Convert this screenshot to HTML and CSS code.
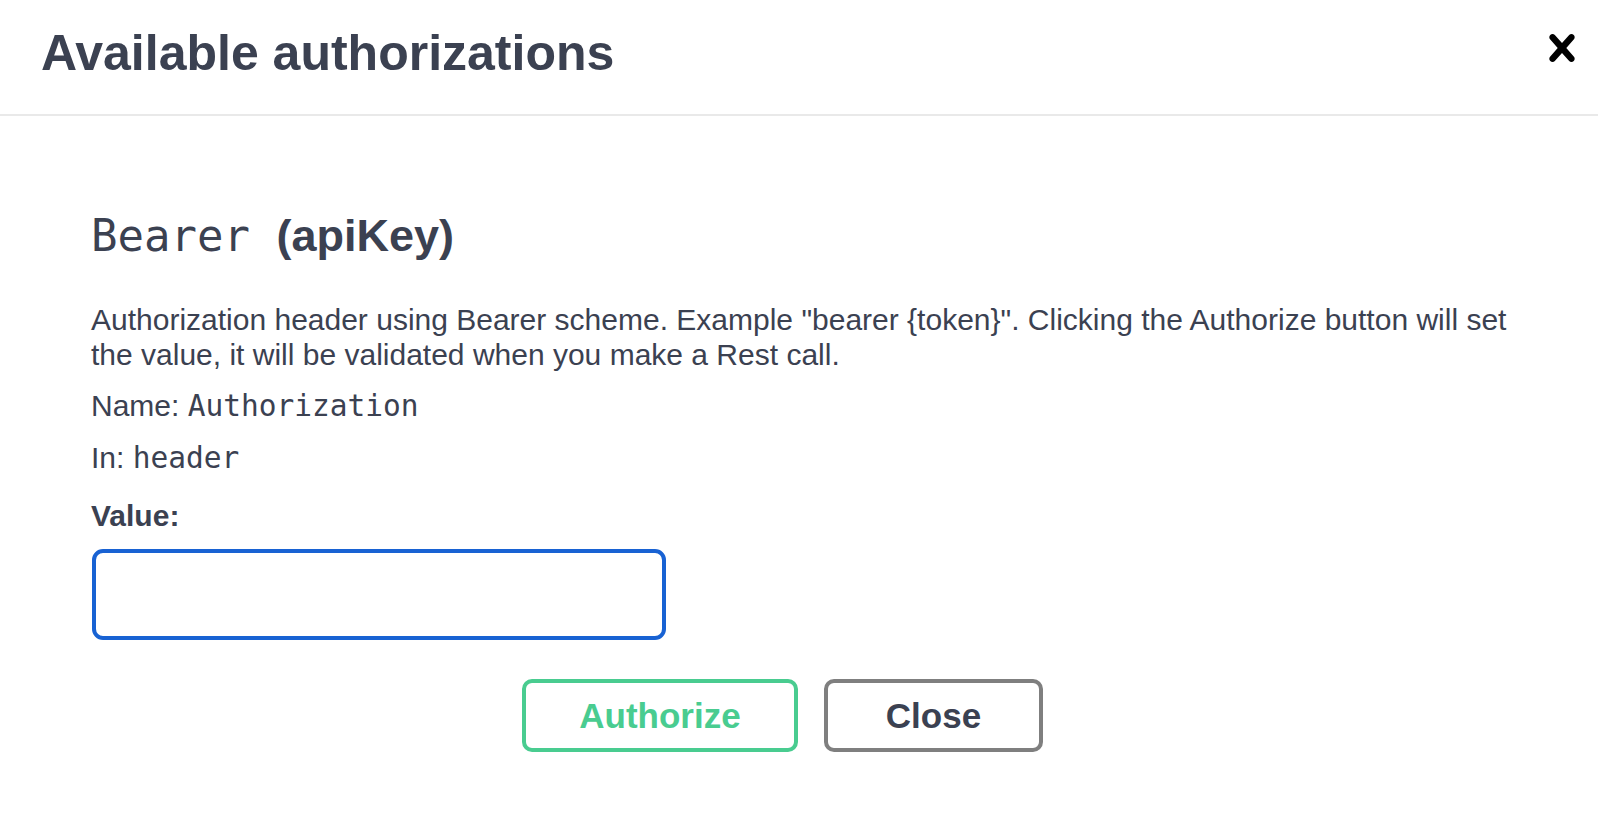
FILE: index.html
```html
<!DOCTYPE html>
<html lang="en">
<head>
<meta charset="utf-8">
<title>Available authorizations</title>
<link rel="stylesheet" href="styles.css">
</head>
<body>
<div class="modal">
  <div class="modal-header">
    <h3 class="modal-title">Available authorizations</h3>
    <button class="close-modal" type="button" aria-label="Close">
      <svg class="close-icon" viewBox="0 0 20 20" width="54" height="54" aria-hidden="true">
        <path d="M14.348 14.849c-.469.469-1.229.469-1.697 0L10 11.819l-2.651 3.029c-.469.469-1.229.469-1.697 0-.469-.469-.469-1.229 0-1.697l2.758-3.15-2.759-3.152c-.469-.469-.469-1.228 0-1.697.469-.469 1.228-.469 1.697 0L10 8.183l2.651-3.031c.469-.469 1.228-.469 1.697 0 .469.469.469 1.229 0 1.697l-2.758 3.152 2.758 3.15c.469.469.469 1.229 0 1.698z"/>
      </svg>
    </button>
  </div>
  <div class="modal-body">
    <h4 class="scheme-title"><code class="scheme-name">Bearer </code>(apiKey)</h4>
    <p class="desc">Authorization header using Bearer scheme. Example "bearer {token}". Clicking the Authorize button will set the value, it will be validated when you make a Rest call.</p>
    <p class="meta meta-name">Name: <code class="mono">Authorization</code></p>
    <p class="meta meta-in">In: <code class="mono">header</code></p>
    <label class="value-label" for="value">Value:</label>
    <input id="value" class="value-input" type="text">
    <div class="btn-wrapper">
      <button class="btn btn-authorize" type="button">Authorize</button>
      <button class="btn btn-close" type="button">Close</button>
    </div>
  </div>
</div>
</body>
</html>
```

FILE: styles.css
```css
html, body {
  margin: 0;
  padding: 0;
  background: #ffffff;
}

body {
  font-family: "Liberation Sans", Arial, Helvetica, sans-serif;
  color: #3b4151;
}

.modal {
  width: 1598px;
  min-height: 826px;
}

.modal-header {
  display: flex;
  justify-content: space-between;
  align-items: flex-start;
  padding: 23px 9px 31px 41px;
  border-bottom: 2px solid #e9e9e9;
}

.modal-title {
  margin: 0;
  font-size: 50px;
  line-height: 60px;
  font-weight: 700;
  color: #3b4151;
}

.close-modal {
  margin: -2px 0 0 0;
  padding: 0;
  border: 0;
  background: none;
  width: 54px;
  height: 54px;
  cursor: pointer;
}

.close-icon {
  display: block;
  fill: #000000;
}

.modal-body {
  padding: 93px 67px 0 91px;
}

.scheme-title {
  margin: 0;
  font-size: 45px;
  line-height: 54px;
  font-weight: 700;
  color: #3b4151;
}

.scheme-name {
  font-family: "DejaVu Sans Mono", "Liberation Mono", monospace;
  font-size: 44px;
  font-weight: 400;
  line-height: 54px;
  white-space: pre;
}

.desc {
  margin: 39px 0 17px 0;
  font-size: 30px;
  line-height: 35px;
}

.meta {
  margin: 0;
  font-size: 30px;
  line-height: 33px;
}

.meta-name {
  margin-bottom: 18px;
}

.meta-in {
  margin-bottom: 24px;
}

.mono {
  font-family: "DejaVu Sans Mono", "Liberation Mono", monospace;
  font-size: 29.5px;
  line-height: 33px;
}

.value-label {
  display: block;
  font-size: 30px;
  line-height: 33px;
  font-weight: 700;
  margin-bottom: 17px;
}

.value-input {
  display: block;
  box-sizing: border-box;
  width: 574px;
  height: 91px;
  margin: 0 0 0 1px;
  padding: 0 20px;
  border: 4px solid #1862d3;
  border-radius: 11px;
  outline: none;
  background: #ffffff;
  font-family: "Liberation Sans", Arial, sans-serif;
  font-size: 30px;
}

.btn-wrapper {
  display: flex;
  justify-content: center;
  gap: 26px;
  margin: 39px -67px 0 -91px;
  padding-right: 33px;
}

.btn {
  box-sizing: border-box;
  height: 73px;
  border-radius: 10px;
  background: #ffffff;
  font-family: "Liberation Sans", Arial, sans-serif;
  font-size: 35px;
  font-weight: 700;
  line-height: 1;
  padding: 0;
  cursor: pointer;
}

.btn-authorize {
  width: 276px;
  border: 4px solid #49cc90;
  color: #49cc90;
}

.btn-close {
  width: 219px;
  border: 4px solid #7f7f7f;
  color: #3b4151;
}
```
